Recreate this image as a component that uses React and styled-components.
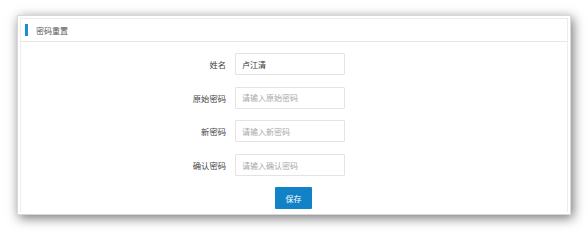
import React from 'react';
import styled, { createGlobalStyle } from 'styled-components';

const Global = createGlobalStyle`
  html, body {
    margin: 0;
    padding: 0;
    background: #fff;
  }
  body {
    font-family: "Noto Sans CJK SC", "Noto Sans", sans-serif;
  }
  * {
    box-sizing: border-box;
  }
`;

const Page = styled.div`
  width: 588px;
  height: 232px;
  padding: 15px 17px 0 17px;
`;

const Window = styled.div`
  width: 554px;
  height: 200px;
  background: #fff;
  border: 1px solid #d8d8d8;
  padding: 2px;
  box-shadow: 2px 3px 11px rgba(0, 0, 0, 0.55);
`;

const Card = styled.div`
  height: 100%;
  border: 1px solid #ececec;
  border-bottom: none;
  display: flex;
  flex-direction: column;
`;

const Header = styled.div`
  height: 23px;
  display: flex;
  align-items: center;
  gap: 8px;
  padding-left: 4px;
  border-bottom: 1px solid #e6e6e6;
`;

const Mark = styled.span`
  width: 3px;
  height: 12px;
  background: #1a8dd4;
`;

const Title = styled.span`
  font-size: 8px;
  color: #555;
`;

const Form = styled.div`
  display: grid;
  grid-template-columns: 205px 110px;
  column-gap: 9px;
  row-gap: 11.7px;
  align-items: center;
  padding-top: 11px;
`;

const Label = styled.label`
  text-align: right;
  font-size: 8.3px;
  color: #444;
`;

const Input = styled.input`
  height: 22px;
  width: 110px;
  border: 1px solid #e3e3e3;
  border-radius: 1px;
  padding: 0 6px;
  font-family: inherit;
  font-size: 8px;
  color: #333;
  outline: none;
  &::placeholder {
    color: #a8a8a8;
  }
`;

const Button = styled.button`
  grid-column: 2;
  margin-left: 40px;
  width: 37px;
  height: 22px;
  border: none;
  border-radius: 1px;
  background: #1282c6;
  color: #fff;
  font-family: inherit;
  font-size: 8px;
  padding: 0;
  margin-top: -0.7px;
`;

const fields = [
  { label: '姓名', value: '卢江清' },
  { label: '原始密码', placeholder: '请输入原始密码' },
  { label: '新密码', placeholder: '请输入新密码' },
  { label: '确认密码', placeholder: '请输入确认密码' },
];

const App = () => (
  <Page>
    <Global />
    <Window>
      <Card>
        <Header>
          <Mark />
          <Title>密码重置</Title>
        </Header>
        <Form>
          {fields.map((f) => (
            <React.Fragment key={f.label}>
              <Label>{f.label}</Label>
              <Input defaultValue={f.value} placeholder={f.placeholder} />
            </React.Fragment>
          ))}
          <Button>保存</Button>
        </Form>
      </Card>
    </Window>
  </Page>
);

export default App;
